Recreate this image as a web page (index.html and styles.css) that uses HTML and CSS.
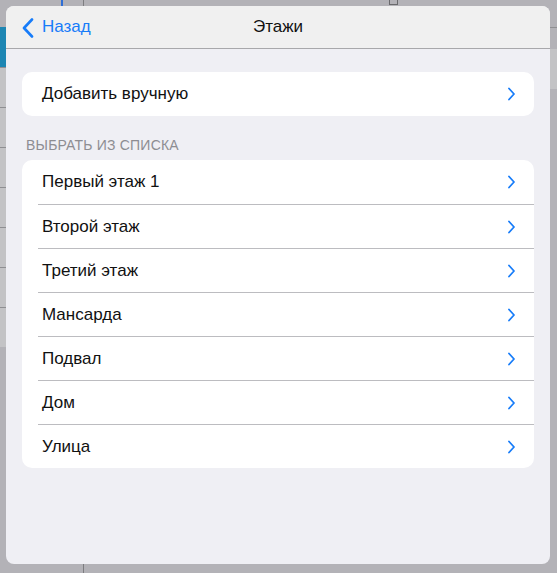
FILE: index.html
```html
<!DOCTYPE html>
<html lang="ru">
<head>
    <meta charset="UTF-8">
    <meta name="viewport" content="width=device-width, initial-scale=1.0">
    <title>Этажи</title>
    <link rel="stylesheet" href="styles.css">
</head>
<body>
    <!-- то, что лежит под поповером -->
    <div class="backdrop">
        <div class="side-left">
            <div class="side-blue"></div>
            <div class="side-row"></div>
            <div class="side-row"></div>
            <div class="side-row"></div>
            <div class="side-row"></div>
            <div class="side-row"></div>
            <div class="side-row"></div>
            <div class="side-row"></div>
        </div>
        <div class="top-blue"></div>
        <div class="top-line"></div>
        <div class="top-box"></div>
        <div class="side-right">
            <div class="side-right-block"></div>
        </div>
    </div>

    <div class="popover">
        <div class="navbar">
            <div class="back">
                <svg class="back-icon" width="12" height="20" viewBox="0 0 12 20">
                    <path d="M10 1.5 L2 10 L10 18.5" fill="none" stroke="#177cf9" stroke-width="2.6" stroke-linecap="round" stroke-linejoin="round"/>
                </svg>
                <span>Назад</span>
            </div>
            <div class="title">Этажи</div>
        </div>

        <div class="content">
            <div class="card">
                <div class="row">
                    <span>Добавить вручную</span>
                    <svg class="chevron" width="9" height="14" viewBox="0 0 9 14"><path d="M2 1.5 L7 7 L2 12.5" fill="none" stroke="#177cf9" stroke-width="1.8" stroke-linecap="round" stroke-linejoin="round"/></svg>
                </div>
            </div>

            <div class="section-title">ВЫБРАТЬ ИЗ СПИСКА</div>

            <div class="card">
                <div class="row">
                    <span>Первый этаж 1</span>
                    <svg class="chevron" width="9" height="14" viewBox="0 0 9 14"><path d="M2 1.5 L7 7 L2 12.5" fill="none" stroke="#177cf9" stroke-width="1.8" stroke-linecap="round" stroke-linejoin="round"/></svg>
                </div>
                <div class="row">
                    <span>Второй этаж</span>
                    <svg class="chevron" width="9" height="14" viewBox="0 0 9 14"><path d="M2 1.5 L7 7 L2 12.5" fill="none" stroke="#177cf9" stroke-width="1.8" stroke-linecap="round" stroke-linejoin="round"/></svg>
                </div>
                <div class="row">
                    <span>Третий этаж</span>
                    <svg class="chevron" width="9" height="14" viewBox="0 0 9 14"><path d="M2 1.5 L7 7 L2 12.5" fill="none" stroke="#177cf9" stroke-width="1.8" stroke-linecap="round" stroke-linejoin="round"/></svg>
                </div>
                <div class="row">
                    <span>Мансарда</span>
                    <svg class="chevron" width="9" height="14" viewBox="0 0 9 14"><path d="M2 1.5 L7 7 L2 12.5" fill="none" stroke="#177cf9" stroke-width="1.8" stroke-linecap="round" stroke-linejoin="round"/></svg>
                </div>
                <div class="row">
                    <span>Подвал</span>
                    <svg class="chevron" width="9" height="14" viewBox="0 0 9 14"><path d="M2 1.5 L7 7 L2 12.5" fill="none" stroke="#177cf9" stroke-width="1.8" stroke-linecap="round" stroke-linejoin="round"/></svg>
                </div>
                <div class="row">
                    <span>Дом</span>
                    <svg class="chevron" width="9" height="14" viewBox="0 0 9 14"><path d="M2 1.5 L7 7 L2 12.5" fill="none" stroke="#177cf9" stroke-width="1.8" stroke-linecap="round" stroke-linejoin="round"/></svg>
                </div>
                <div class="row">
                    <span>Улица</span>
                    <svg class="chevron" width="9" height="14" viewBox="0 0 9 14"><path d="M2 1.5 L7 7 L2 12.5" fill="none" stroke="#177cf9" stroke-width="1.8" stroke-linecap="round" stroke-linejoin="round"/></svg>
                </div>
            </div>
        </div>
    </div>
</body>
</html>
```

FILE: styles.css
```css
* {
    margin: 0;
    padding: 0;
    box-sizing: border-box;
}

body {
    font-family: 'Liberation Sans', Arial, sans-serif;
    background: #b3b2b7;
    width: 557px;
    height: 573px;
    overflow: hidden;
    position: relative;
    padding: 6px 7px 9px 6px;
}

/* фон под поповером */
.backdrop {
    position: absolute;
    inset: 0;
}

.side-left {
    position: absolute;
    left: 0;
    top: 27px;
    width: 6px;
}

.side-blue {
    height: 40px;
    background: #1d86b3;
}

.side-row {
    height: 40px;
    background: #c3c3c5;
    border-top: 1px solid #8f8f92;
}

.top-blue {
    position: absolute;
    left: 61px;
    top: 0;
    width: 2px;
    height: 6px;
    background: #2f6fd6;
}

.top-line {
    position: absolute;
    left: 83px;
    top: 0;
    width: 1px;
    height: 573px;
    background: #7d7d80;
}

.top-box {
    position: absolute;
    left: 389px;
    top: 0;
    width: 9px;
    height: 5px;
    border: 1px solid #6a6a6d;
    border-top: none;
}

.side-right {
    position: absolute;
    right: 0;
    top: 27px;
    width: 7px;
    height: 546px;
    border-top: 1px solid #8f8f92;
    padding-top: 21px;
}

.side-right-block {
    height: 40px;
    background: #c3c3c5;
}

/* поповер */
.popover {
    position: relative;
    height: 100%;
    background: #efeff4;
    border-radius: 8px;
    overflow: hidden;
    display: flex;
    flex-direction: column;
}

.navbar {
    height: 43px;
    background: #f0f0f0;
    border-bottom: 1px solid #a8a8ab;
    display: flex;
    align-items: center;
    justify-content: center;
    position: relative;
    flex-shrink: 0;
}

.back {
    position: absolute;
    left: 16px;
    top: 0;
    bottom: 0;
    display: flex;
    align-items: center;
    gap: 8px;
    color: #177cf9;
    font-size: 17px;
}

.back-icon {
    margin-top: 1px;
}

.title {
    font-size: 17px;
    color: #111;
}

.content {
    padding: 23px 16px 0 16px;
}

.card {
    background: #fff;
    border-radius: 10px;
    padding-left: 16px;
}

.row {
    height: 44px;
    display: flex;
    align-items: center;
    justify-content: space-between;
    padding: 0 18px 0 4px;
    font-size: 17px;
    color: #111;
    border-top: 1px solid #bcbcc0;
}

.row:first-child {
    border-top: none;
}

.section-title {
    margin: 21px 0 7px 4px;
    font-size: 14px;
    color: #8d8d92;
    letter-spacing: 0.2px;
}
```
